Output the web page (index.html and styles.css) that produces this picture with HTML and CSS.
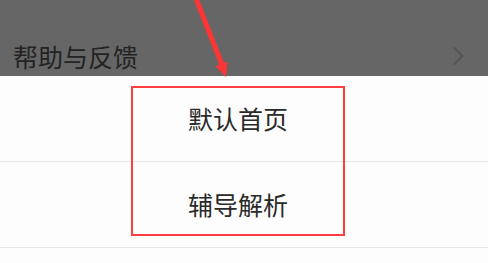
FILE: index.html
```html
<!DOCTYPE html>
<html lang="zh-CN">
<head>
<meta charset="utf-8">
<title>设置</title>
<link rel="stylesheet" href="styles.css">
</head>
<body>
<div class="screen">
  <div class="dimmed">
    <div class="dim-row">
      <span class="dim-label">帮助与反馈</span>
      <svg class="chevron" width="14" height="20" viewBox="0 0 14 20"><polyline points="2,1.5 10.5,10 2,18.5" fill="none" stroke="#555" stroke-width="2"/></svg>
    </div>
  </div>
  <div class="list">
    <div class="item">默认首页</div>
    <div class="item">辅导解析</div>
    <div class="item short"></div>
  </div>
  <div class="highlight"></div>
  <svg class="arrow" width="488" height="263" viewBox="0 0 488 263">
    <line x1="195" y1="-4" x2="222.5" y2="66" stroke="#ff3535" stroke-width="5"/>
    <polygon points="226,77 227.5,61.5 215.5,66.3" fill="#ff3535"/>
  </svg>
</div>
</body>
</html>
```
FILE: styles.css
```css
html, body {
  margin: 0;
  padding: 0;
  background: #fdfdfd;
}
.screen {
  position: relative;
  width: 488px;
  height: 263px;
  overflow: hidden;
  font-family: "Noto Sans CJK SC", "Noto Sans", sans-serif;
}
.dimmed {
  height: 76px;
  background: #666666;
  display: flex;
  flex-direction: column;
  justify-content: flex-end;
}
.dim-row {
  display: flex;
  align-items: center;
  justify-content: space-between;
  padding: 0 22px 4px 13px;
  height: 32px;
}
.dim-label {
  font-size: 25px;
  line-height: 1;
  color: #232323;
}
.chevron {
  display: block;
}
.list {
  display: flex;
  flex-direction: column;
}
.item {
  height: 85px;
  border-bottom: 1px solid #e6e6e6;
  display: flex;
  align-items: center;
  justify-content: center;
  font-size: 25px;
  line-height: 1;
  color: #2a2a2a;
  padding-right: 12px;
}
.item.short {
  height: 20px;
  border-bottom: none;
}
.highlight {
  position: absolute;
  left: 131px;
  top: 86px;
  width: 210px;
  height: 146px;
  border: 2px solid #ff3d3d;
}
.arrow {
  position: absolute;
  left: 0;
  top: 0;
}
```
